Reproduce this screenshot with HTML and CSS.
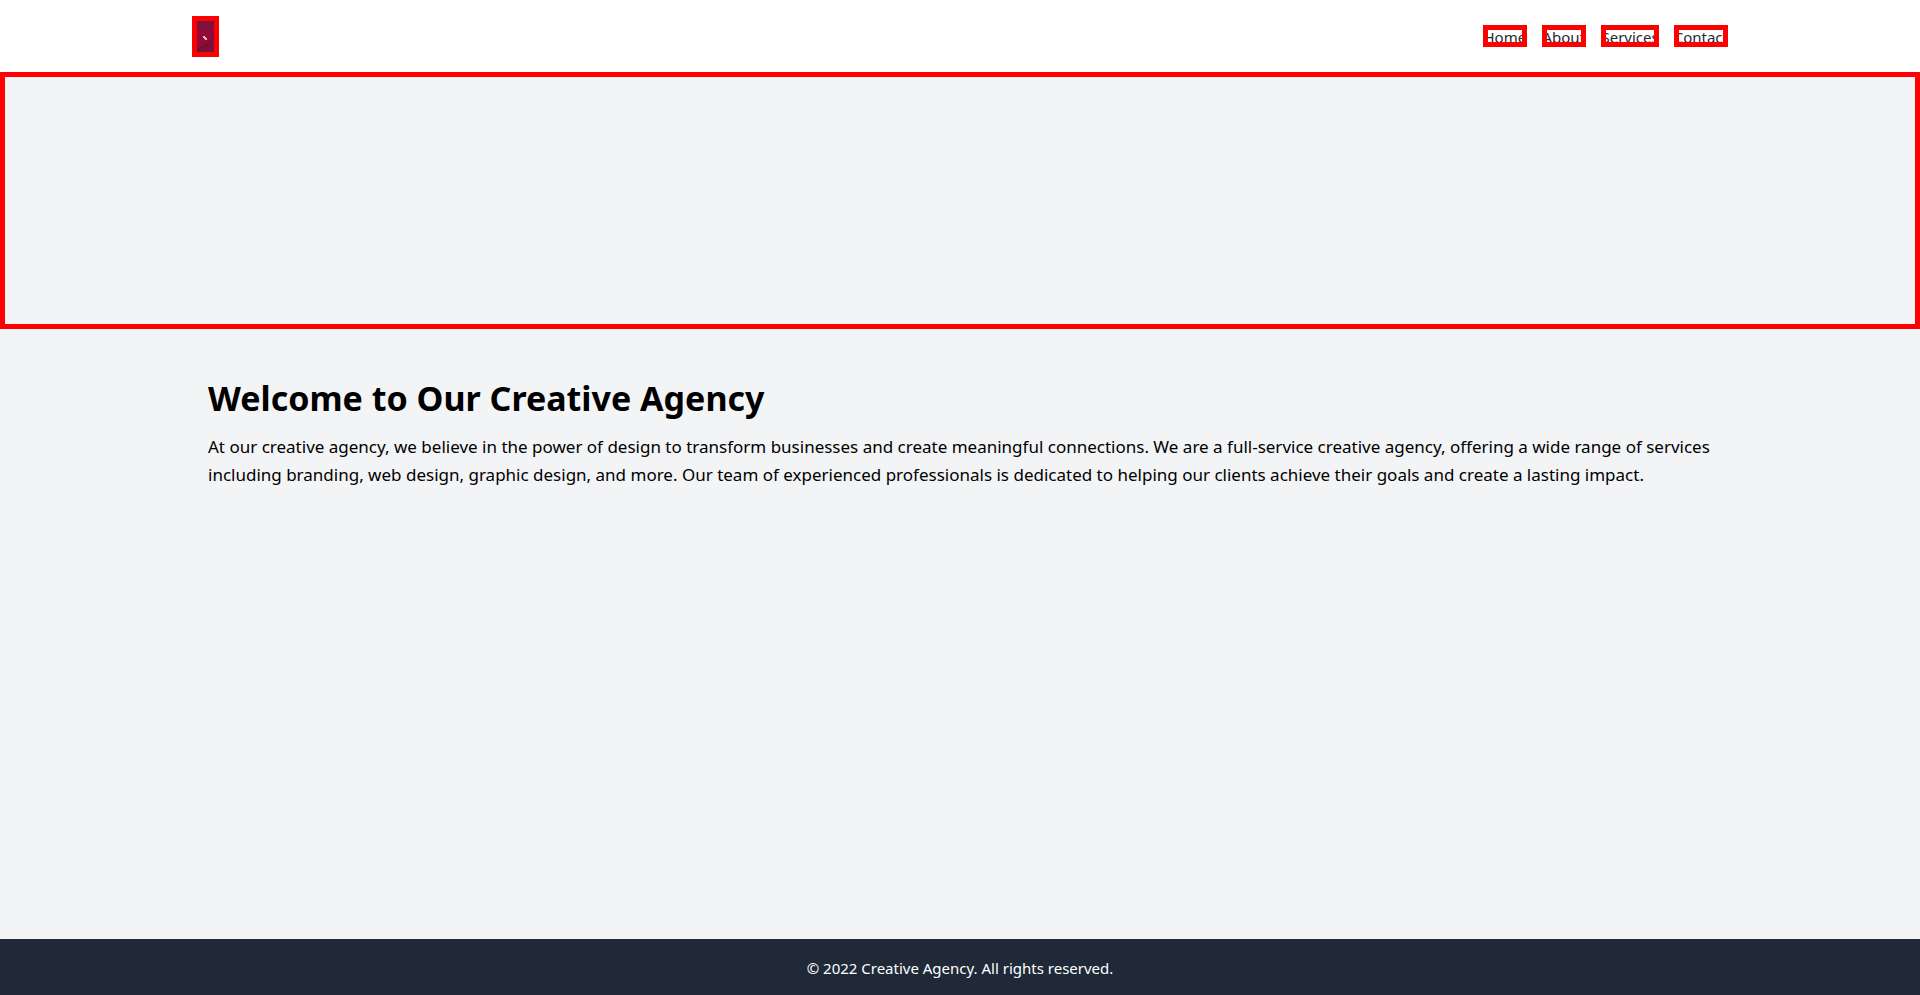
FILE: index.html
```html
<!DOCTYPE html>
<html lang="en">
<head>
  <meta charset="utf-8">
  <meta name="viewport" content="width=device-width, initial-scale=1">
  <title>Creative Agency</title>
  <link rel="stylesheet" href="styles.css">
</head>
<body>
  <header class="site-header">
    <div class="bar">
      <svg class="logo outlined" viewBox="0 0 27 41" role="img" aria-label="Creative Agency">
        <defs>
          <linearGradient id="wine" x1="0" y1="0" x2="0" y2="1">
            <stop offset="0" stop-color="#6d173b"/>
            <stop offset="0.4" stop-color="#920a3c"/>
            <stop offset="0.75" stop-color="#900a3a"/>
            <stop offset="1" stop-color="#6c1234"/>
          </linearGradient>
        </defs>
        <rect width="27" height="41" fill="url(#wine)"/>
        <path d="M5 36V34L11 31L17 27L22 22V36Z" fill="#7d1039"/>
        <path d="M5 34L11 31L17 27L22 22" fill="none" stroke="#5c1032"/>
        <path d="M11 20h2v1h1v1h1v2h-2v-1h-1v-1h-1z" fill="#e5bd98"/>
      </svg>
      <nav class="nav" aria-label="Main">
        <a class="nav-link outlined" href="#home">Home</a>
        <a class="nav-link outlined" href="#about">About</a>
        <a class="nav-link outlined" href="#services">Services</a>
        <a class="nav-link outlined" href="#contact">Contact</a>
      </nav>
    </div>
  </header>
  <section class="hero outlined" aria-label="Hero"></section>
  <main class="content">
    <h1 class="title">Welcome to Our Creative Agency</h1>
    <p class="intro">At our creative agency, we believe in the power of design to transform businesses and create meaningful connections. We are a full-service creative agency, offering a wide range of services including branding, web design, graphic design, and more. Our team of experienced professionals is dedicated to helping our clients achieve their goals and create a lasting impact.</p>
  </main>
  <footer class="site-footer">
    <p class="copyright">© 2022 Creative Agency. All rights reserved.</p>
  </footer>
</body>
</html>
```
FILE: styles.css
```css
*,
*::before,
*::after {
  box-sizing: border-box;
}

body {
  display: flex;
  flex-direction: column;
  min-height: 100vh;
  margin: 0;
  background: #f3f4f6;
  color: #000;
  font-family: "Segoe UI", "Noto Sans", sans-serif;
  font-size: 15px;
  line-height: 24px;
}

.outlined {
  outline: 5px solid #f00;
  outline-offset: -5px;
}

.site-header {
  padding: 16px 0;
  background: #fff;
}

.bar,
.content {
  width: 80%;
  max-width: 1536px;
  margin: 0 auto;
}

.bar {
  display: flex;
  align-items: center;
  justify-content: space-between;
  height: 40px;
}

.logo {
  width: 27px;
  height: 41px;
}

.nav {
  display: flex;
  gap: 15px;
}

.nav-link {
  min-width: 44px;
  padding-top: 2px;
  color: #1f2937;
  line-height: 20px;
  text-decoration: none;
}

.hero {
  height: 257px;
}

.content {
  flex: 1;
  padding: 49px 16px;
}

.title {
  margin: 0 0 15px;
  font-size: 34px;
  line-height: 40px;
}

.intro {
  margin: 0;
  font-size: 17px;
  line-height: 28px;
}

.site-footer {
  padding: 17px 16px 15px;
  background: #1f2937;
  color: #fff;
  text-align: center;
}

.copyright {
  margin: 0;
}
```
